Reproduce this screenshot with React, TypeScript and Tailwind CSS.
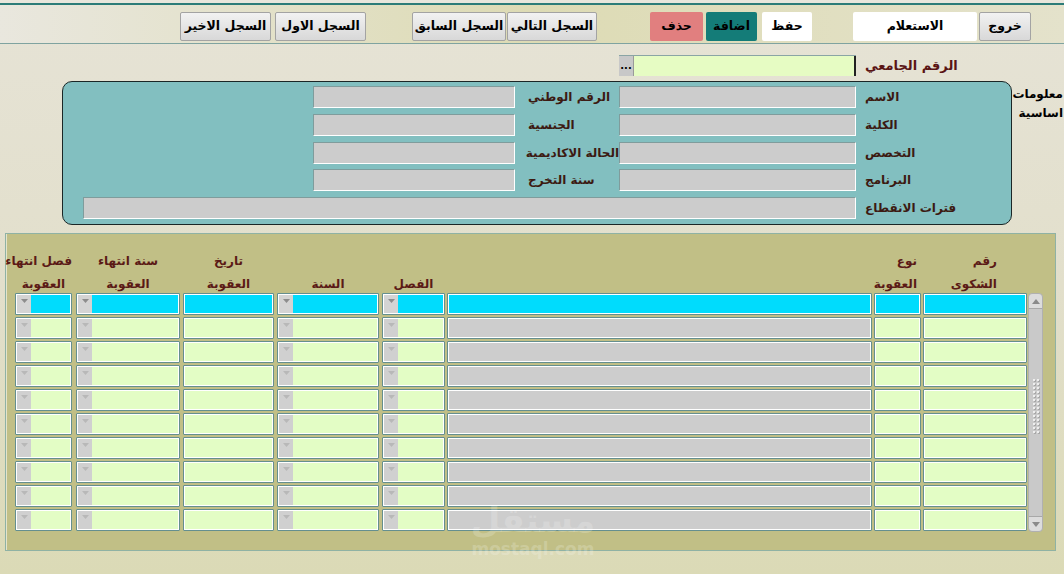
import React from "react";

type Col = {
  w: string;
  ms: string;
  head: [string, string];
  headAlign: string;
  kind: "plain" | "grey" | "drop";
};

const cols: Col[] = [
  { w: "w-[104px]", ms: "ms-[1px]", head: ["رقم", "الشكوى"], headAlign: "text-right pr-[30px]", kind: "plain" },
  { w: "w-[47px]", ms: "ms-[2px]", head: ["نوع", "العقوبة"], headAlign: "text-right pr-[4px]", kind: "plain" },
  { w: "w-[425px]", ms: "ms-[2px]", head: ["", ""], headAlign: "text-center", kind: "grey" },
  { w: "w-[63px]", ms: "ms-[2px]", head: ["", "الفصل"], headAlign: "text-center", kind: "drop" },
  { w: "w-[102px]", ms: "ms-[3px]", head: ["", "السنة"], headAlign: "text-center", kind: "drop" },
  { w: "w-[91px]", ms: "ms-[3px]", head: ["تاريخ", "العقوبة"], headAlign: "text-center", kind: "plain" },
  { w: "w-[104px]", ms: "ms-[3px]", head: ["سنة انتهاء", "العقوبة"], headAlign: "text-center", kind: "drop" },
  { w: "w-[57px]", ms: "ms-[4px]", head: ["فصل انتهاء", "العقوبة"], headAlign: "text-center", kind: "drop" },
];

const rows = Array.from({ length: 10 }, (_, i) => i);

function ToolBtn({ label, className }: { label: string; className: string }) {
  return (
    <div
      className={
        "h-[29px] flex items-center justify-center rounded-[2px] text-[12.5px] font-bold text-black whitespace-nowrap " +
        className
      }
    >
      {label}
    </div>
  );
}

function Field({ className }: { className: string }) {
  return (
    <div
      className={
        "h-[22px] bg-[#cccccc] border-t border-l border-t-[#7f9c9c] border-l-[#7f9c9c] border-b border-r border-b-white border-r-white " +
        className
      }
    />
  );
}

function Cell({ col, first }: { col: Col; first: boolean }) {
  const bg = col.kind === "grey" && !first ? "bg-[#cdcdcd]" : first ? "bg-[#00dcfd]" : "bg-[#e3fdc5]";
  return (
    <div
      className={
        "h-[22px] flex border border-[#658f8f] rounded-[1px] shadow-[inset_0_0_0_1px_#ffffff] p-[1px] " +
        bg +
        " " +
        col.w +
        " " +
        col.ms
      }
    >
      <div className="flex-1" />
      {col.kind === "drop" && (
        <div
          className={
            "w-[14px] h-full flex justify-center pt-[4px] " + (first ? "bg-[#d4d4d4]" : "bg-[#d0d0d0]")
          }
        >
          <svg width="7" height="4" viewBox="0 0 7 4">
            <path d="M0 0 L7 0 L3.5 4 Z" fill={first ? "#8d8d8d" : "#b8b8b8"} />
          </svg>
        </div>
      )}
    </div>
  );
}

function Scrollbar() {
  return (
    <div className="w-[15px] h-[239px] mt-[59px] ms-[12px] flex flex-col bg-[#c9c9c9] border border-[#b0b0b0] rounded-[4px]">
      <div className="h-[15px] bg-[#dcdcdc] border-b border-[#a8a8a8] rounded-t-[4px] flex items-center justify-center">
        <svg width="8" height="5" viewBox="0 0 8 5">
          <path d="M0 5 L8 5 L4 0 Z" fill="#8a8a8a" />
        </svg>
      </div>
      <div className="flex-1 flex items-center justify-center">
        <div className="grid grid-cols-2 gap-x-[2px] gap-y-[2px] mt-[-14px]">
          {Array.from({ length: 28 }, (_, i) => (
            <div key={i} className="w-[2px] h-[2px] bg-[#eeeeee] shadow-[1px_1px_0_#a8a8a8]" />
          ))}
        </div>
      </div>
      <div className="h-[15px] bg-[#dcdcdc] border-t border-[#a8a8a8] rounded-b-[4px] flex items-center justify-center">
        <svg width="8" height="5" viewBox="0 0 8 5">
          <path d="M0 0 L8 0 L4 5 Z" fill="#8a8a8a" />
        </svg>
      </div>
    </div>
  );
}

export default function App() {
  const formRows: [string, string][] = [
    ["الاسم", "الرقم الوطني"],
    ["الكلية", "الجنسية"],
    ["التخصص", "الحالة الاكاديمية"],
    ["البرنامج", "سنة التخرج"],
  ];
  const rowGaps = ["mt-0", "mt-[6px]", "mt-[6px]", "mt-[5px]"];

  return (
    <div
      dir="rtl"
      className="relative w-[1064px] h-[574px] overflow-hidden bg-gradient-to-b from-[#e6e3d6] via-[#e2dfcb] to-[#dbdab6] font-['DejaVu_Sans',sans-serif]"
    >
      {/* toolbar */}
      <div className="h-[44px] bg-gradient-to-l from-[#e4e2cb] via-[#dddbb4] to-[#e9e7de] border-b border-[#7fa3a0]">
        <div className="h-[3px] bg-[#e8e6dc]" />
        <div className="h-[2px] bg-[#2c7c78]" />
        <div className="flex items-start pt-[7px] ps-[33px]">
          <ToolBtn label="خروج" className="w-[52px] bg-gradient-to-b from-[#f2f2f2] to-[#d8d8d8] border border-[#a3a3a3]" />
          <ToolBtn label="الاستعلام" className="w-[124px] ms-[2px] bg-white" />
          <ToolBtn label="حفظ" className="w-[50px] ms-[41px] bg-white" />
          <ToolBtn label="اضافة" className="w-[51px] ms-[5px] bg-[#147c78] text-[#0a1a1a]" />
          <ToolBtn label="حذف" className="w-[53px] ms-[3px] bg-[#e17f7f]" />
          <ToolBtn label="السجل التالي" className="w-[90px] ms-[53px] bg-gradient-to-b from-[#f2f2f2] to-[#d8d8d8] border border-[#a3a3a3]" />
          <ToolBtn label="السجل السابق" className="w-[94px] ms-[1px] bg-gradient-to-b from-[#f2f2f2] to-[#d8d8d8] border border-[#a3a3a3]" />
          <ToolBtn label="السجل الاول" className="w-[91px] ms-[46px] bg-gradient-to-b from-[#f2f2f2] to-[#d8d8d8] border border-[#a3a3a3]" />
          <ToolBtn label="السجل الاخير" className="w-[91px] ms-[4px] bg-gradient-to-b from-[#f2f2f2] to-[#d8d8d8] border border-[#a3a3a3]" />
        </div>
      </div>

      {/* student number */}
      <div className="flex items-center mt-[11px] ps-[53px] h-[21px]">
        <div className="w-[155px] text-left pl-[9px] text-[13px] font-bold text-[#5a1414] whitespace-nowrap">الرقم الجامعي</div>
        <div className="w-[237px] h-[21px] flex bg-[#e6fcc3] border-t border-[#8aa5a5]">
          <div className="w-[2px] h-full bg-[#222]" />
          <div className="flex-1" />
          <div className="w-[15px] h-full bg-[#c8c8c8] border-r border-[#9a9a9a] flex items-center justify-center text-[10px] font-bold text-black leading-none">
            ...
          </div>
        </div>
      </div>

      {/* basic info */}
      <div className="flex mt-[5px]">
        <div className="w-[52px] pr-[1px] pt-[4px] text-right text-[12px] font-bold text-black leading-[19px] whitespace-nowrap">
          <div>معلومات</div>
          <div>اساسية</div>
        </div>
        <div className="w-[950px] h-[144px] rounded-[10px] border border-[#1b2626] bg-[#82bfc0] pt-[4px]">
          {formRows.map((r, i) => (
            <div key={i} className={"flex items-center h-[22px] " + rowGaps[i]}>
              <div className="w-[155px] text-left pl-[9px] text-[12px] font-bold text-[#3c1a12] whitespace-nowrap">{r[0]}</div>
              <Field className="w-[237px]" />
              <div className="w-[104px] text-left pl-[13px] text-[12px] font-bold text-[#3c1a12] whitespace-nowrap">{r[1]}</div>
              <Field className="w-[202px]" />
            </div>
          ))}
          <div className="flex items-center h-[22px] mt-[6px]">
            <div className="w-[155px] text-left pl-[9px] text-[12px] font-bold text-[#3c1a12] whitespace-nowrap">فترات الانقطاع</div>
            <Field className="w-[773px]" />
          </div>
        </div>
      </div>

      {/* penalties grid */}
      <div className="mr-[8px] mt-[8px] w-[1051px] h-[318px] bg-[#c1bf86] border border-[#8fb2a4] shadow-[inset_1px_0_0_#e4e4cc] flex">
        <Scrollbar />
        <div className="flex flex-col">
          <div className="flex h-[59px]">
            {cols.map((c, i) => (
              <div
                key={i}
                className={
                  "pt-[16px] text-[12px] font-bold text-[#5b1a16] leading-[23px] whitespace-nowrap " +
                  c.w +
                  " " +
                  c.ms +
                  " " +
                  c.headAlign
                }
              >
                <div>{c.head[0] || "\u00a0"}</div>
                <div>{c.head[1] || "\u00a0"}</div>
              </div>
            ))}
          </div>
          <div className="flex flex-col gap-[2px]">
            {rows.map((r) => (
              <div key={r} className="flex">
                {cols.map((c, i) => (
                  <Cell key={i} col={c} first={r === 0} />
                ))}
              </div>
            ))}
          </div>
        </div>
      </div>

      {/* watermark */}
      <div className="absolute left-[468px] top-[500px] w-[130px] flex flex-col items-center pointer-events-none" dir="ltr">
        <div className="text-[34px] font-bold leading-[40px] text-white/20">مستقل</div>
        <div className="text-[17px] font-bold leading-[18px] text-white/20">mostaql.com</div>
      </div>
    </div>
  );
}
